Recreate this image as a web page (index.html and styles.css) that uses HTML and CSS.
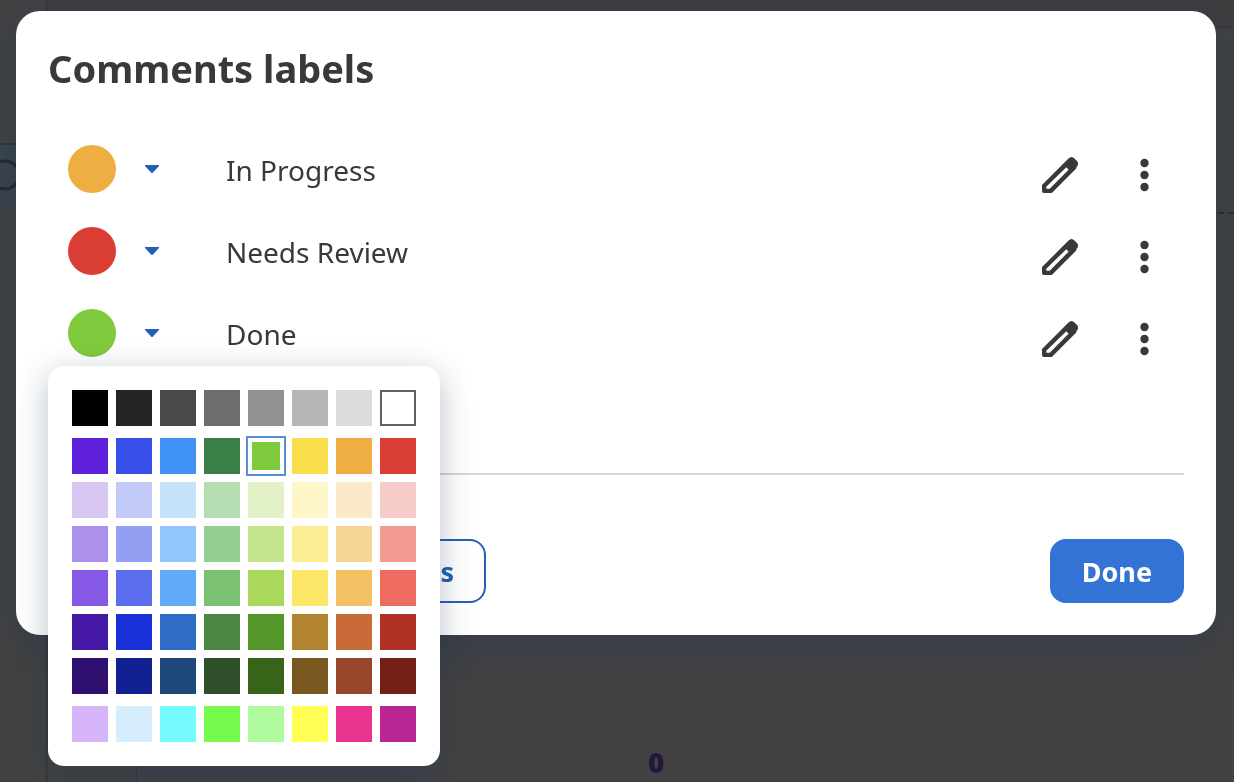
FILE: index.html
```
<!DOCTYPE html>
<html lang="en">
<head>
    <meta charset="UTF-8">
    <meta name="viewport" content="width=device-width, initial-scale=1.0">
    <title>Comments labels</title>
    <link rel="stylesheet" href="styles.css">
</head>
<body>
    <!-- Board behind the dialog -->
    <div class="board" aria-hidden="true">
        <div class="board-side">
            <div class="board-tool">
                <svg width="19" height="32" viewBox="0 0 19 32"><circle cx="5" cy="16" r="14" fill="none" stroke="#25282b" stroke-width="3"/></svg>
            </div>
        </div>
        <div class="board-main">
            <div class="board-bar"></div>
            <div class="board-lane"></div>
            <div class="board-footer">
                <div class="board-card"></div>
                <span class="board-count">0</span>
            </div>
        </div>
    </div>

    <main class="dialog" role="dialog" aria-labelledby="dialogTitle">
        <h1 id="dialogTitle">Comments labels</h1>

        <ul class="labels">
            <li class="label-row">
                <div class="picker">
                    <span class="dot orange"></span>
                    <button type="button" class="caret" aria-label="Change In Progress color">
                        <svg width="14" height="8" viewBox="0 0 14 8"><path d="M0 0h14v1L7.500 8h-1L0 1z" fill="#255fb8"/></svg>
                    </button>
                </div>
                <span class="label-name">In Progress</span>
                <button type="button" class="icon-button" aria-label="Edit In Progress">
                    <svg width="36" height="36"><use href="#pencil"/></svg>
                </button>
                <button type="button" class="icon-button" aria-label="More options for In Progress">
                    <svg width="36" height="36"><use href="#dots"/></svg>
                </button>
            </li>
            <li class="label-row">
                <div class="picker">
                    <span class="dot red"></span>
                    <button type="button" class="caret" aria-label="Change Needs Review color">
                        <svg width="14" height="8" viewBox="0 0 14 8"><path d="M0 0h14v1L7.500 8h-1L0 1z" fill="#255fb8"/></svg>
                    </button>
                </div>
                <span class="label-name">Needs Review</span>
                <button type="button" class="icon-button" aria-label="Edit Needs Review">
                    <svg width="36" height="36"><use href="#pencil"/></svg>
                </button>
                <button type="button" class="icon-button" aria-label="More options for Needs Review">
                    <svg width="36" height="36"><use href="#dots"/></svg>
                </button>
            </li>
            <li class="label-row">
                <div class="picker">
                    <span class="dot green"></span>
                    <button type="button" class="caret" aria-label="Change Done color" aria-expanded="true">
                        <svg width="14" height="8" viewBox="0 0 14 8"><path d="M0 0h14v1L7.500 8h-1L0 1z" fill="#255fb8"/></svg>
                    </button>
                    <div class="palette" id="palette" role="radiogroup" aria-label="Label color"></div>
                </div>
                <span class="label-name">Done</span>
                <button type="button" class="icon-button" aria-label="Edit Done">
                    <svg width="36" height="36"><use href="#pencil"/></svg>
                </button>
                <button type="button" class="icon-button" aria-label="More options for Done">
                    <svg width="36" height="36"><use href="#dots"/></svg>
                </button>
            </li>
        </ul>

        <div class="actions">
            <button type="button" class="button outline">Restore default labels</button>
            <button type="button" class="button primary">Done</button>
        </div>
    </main>

    <svg width="0" height="0" class="icons">
        <symbol id="pencil" viewBox="0 0 36 36">
            <path fill="#393939" fill-rule="evenodd" d="M0 28 26.500 1.500Q29.500-1.500 32.500 1.500L34.700 3.700Q37.500 6.500 34.700 9.700L34 11.800 9.800 36H2Q0 36 0 34zM4.300 29.800V31.800H7.700L26.600 12.700 24.300 10.200z"/>
        </symbol>
        <symbol id="dots" viewBox="0 0 36 36">
            <g fill="#393939">
                <circle cx="18.500" cy="6" r="4.200"/>
                <circle cx="18.500" cy="18" r="4.200"/>
                <circle cx="18.500" cy="30" r="4.200"/>
            </g>
        </symbol>
    </svg>

    <script src="script.js"></script>
</body>
</html>
```
FILE: styles.css
```
* {
    box-sizing: border-box;
}
body {
    font-family: "Noto Sans", sans-serif;
    margin: 0;
    padding: 11px 18px 16px 16px;
    min-height: 100vh;
    background-color: #424242;
    color: #393939;
}
button {
    font-family: inherit;
    cursor: pointer;
}
.icons {
    position: absolute;
}

/* board */
.board {
    position: fixed;
    inset: 0;
    display: flex;
}
.board-side {
    width: 48px;
    padding-top: 143px;
    border-right: 2px solid #38393a;
}
.board-tool {
    height: 62px;
    padding-top: 14px;
    background-color: #3b444c;
    border-top: 2px solid #333539;
}
.board-main {
    flex: 1;
    display: flex;
    flex-direction: column;
}
.board-bar {
    height: 28px;
    background-color: #3e3e3e;
    border-bottom: 1px solid #363636;
}
.board-lane {
    height: 186px;
    border-bottom: 2px dashed #2c2d2f;
}
.board-footer {
    flex: 1;
    display: flex;
    align-items: flex-end;
    padding-left: 88px;
}
.board-card {
    width: 300px;
    height: 140px;
    background-color: #424247;
    border-left: 1px solid #38383b;
}
.board-count {
    margin-left: 212px;
    font-family: "Open Sans", sans-serif;
    font-size: 28px;
    line-height: 40px;
    font-weight: 800;
    color: #24163f;
}

/* dialog */
.dialog {
    position: relative;
    padding: 32px;
    background-color: #fff;
    border-radius: 24px;
    box-shadow: 0 8px 40px rgba(32, 53, 92, 0.4);
}
h1 {
    margin: 0;
    font-size: 38px;
    line-height: 50px;
    font-weight: 700;
}
.labels {
    list-style: none;
    margin: 0;
    padding: 52px 16px 82px 20px;
    border-bottom: 2px solid #d5d6d6;
}
.label-row {
    display: flex;
    align-items: flex-start;
    height: 82px;
}
.picker {
    position: relative;
    display: flex;
    align-items: center;
    gap: 24px;
    width: 158px;
}
.dot {
    width: 48px;
    height: 48px;
    border-radius: 50%;
}
.orange {
    background-color: #efae42;
}
.red {
    background-color: #da3d34;
}
.green {
    background-color: #80ca3d;
}
.caret {
    display: flex;
    padding: 4px 5px;
    background: none;
    border: none;
}
.label-name {
    flex: 1;
    font-size: 28px;
    line-height: 50px;
}
.icon-button {
    display: flex;
    margin: 6px 0 0 36px;
    padding: 6px;
    background: none;
    border: none;
}
.actions {
    display: flex;
    justify-content: space-between;
    padding-top: 64px;
}
.button {
    height: 64px;
    padding: 0 30px;
    border: 2px solid #255fb8;
    border-radius: 16px;
    font-size: 27px;
    font-weight: 700;
}
.outline {
    min-width: 438px;
    background-color: #fff;
    color: #255fb8;
    text-align: right;
}
.primary {
    background-color: #3273d5;
    border-color: #3273d5;
    color: #fff;
}

/* color palette */
.palette {
    position: absolute;
    top: 57px;
    left: -20px;
    z-index: 1;
    display: flex;
    flex-direction: column;
    gap: 12px;
    padding: 24px;
    background-color: #fff;
    border-radius: 16px;
    box-shadow: 0 8px 32px rgba(20, 45, 80, 0.3);
}
.palette-group {
    display: grid;
    grid-template-columns: repeat(8, 36px);
    gap: 8px;
}
.swatch {
    appearance: none;
    width: 36px;
    height: 36px;
    margin: 0;
    cursor: pointer;
}
.swatch[value="#ffffff"] {
    border: 2px solid #606060;
}
.swatch:checked {
    border: 4px solid #fff;
    outline: 2px solid #568fd8;
}
```
FILE: script.js
```
// Grays, main colors with tints and shades, then brights
const groups = [
    ["#000000", "#242424", "#494949", "#6e6e6e", "#929292", "#b6b6b6", "#dbdbdb", "#ffffff"],
    [
        "#5e20db", "#384fe9", "#4092f7", "#3b7f48", "#80ca3d", "#f8de4b", "#efae42", "#da3d34",
        "#d8c7f3", "#c2caf7", "#c5e2fb", "#b5ddb2", "#e2f1c5", "#fef6c9", "#fae9c9", "#f7ccc8",
        "#ad90ec", "#939ff1", "#92c5fb", "#96cd90", "#c5e58d", "#fcee94", "#f5d694", "#f29b93",
        "#8558e5", "#5b6eed", "#60aaf9", "#7ac272", "#aad85c", "#fbe667", "#f2c164", "#ee6d60",
        "#4519a5", "#1930d9", "#2f6cc5", "#4c8843", "#54962a", "#b28430", "#c96a39", "#af3224",
        "#2f106e", "#102091", "#1f487a", "#2f502b", "#376419", "#78581e", "#98482a", "#742016"
    ],
    ["#d6b4fa", "#d4ecfc", "#75fbfd", "#76fb4c", "#b1fb9f", "#fffe54", "#e9338f", "#b92693"]
];
const current = "#80ca3d";
const palette = document.getElementById("palette");

groups.forEach(colors => {
    const group = document.createElement("div");
    group.className = "palette-group";
    colors.forEach(color => {
        const swatch = document.createElement("input");
        swatch.type = "radio";
        swatch.name = "color";
        swatch.className = "swatch";
        swatch.value = color;
        swatch.checked = color === current;
        swatch.setAttribute("aria-label", color);
        swatch.style.backgroundColor = color;
        group.appendChild(swatch);
    });
    palette.appendChild(group);
});
```
